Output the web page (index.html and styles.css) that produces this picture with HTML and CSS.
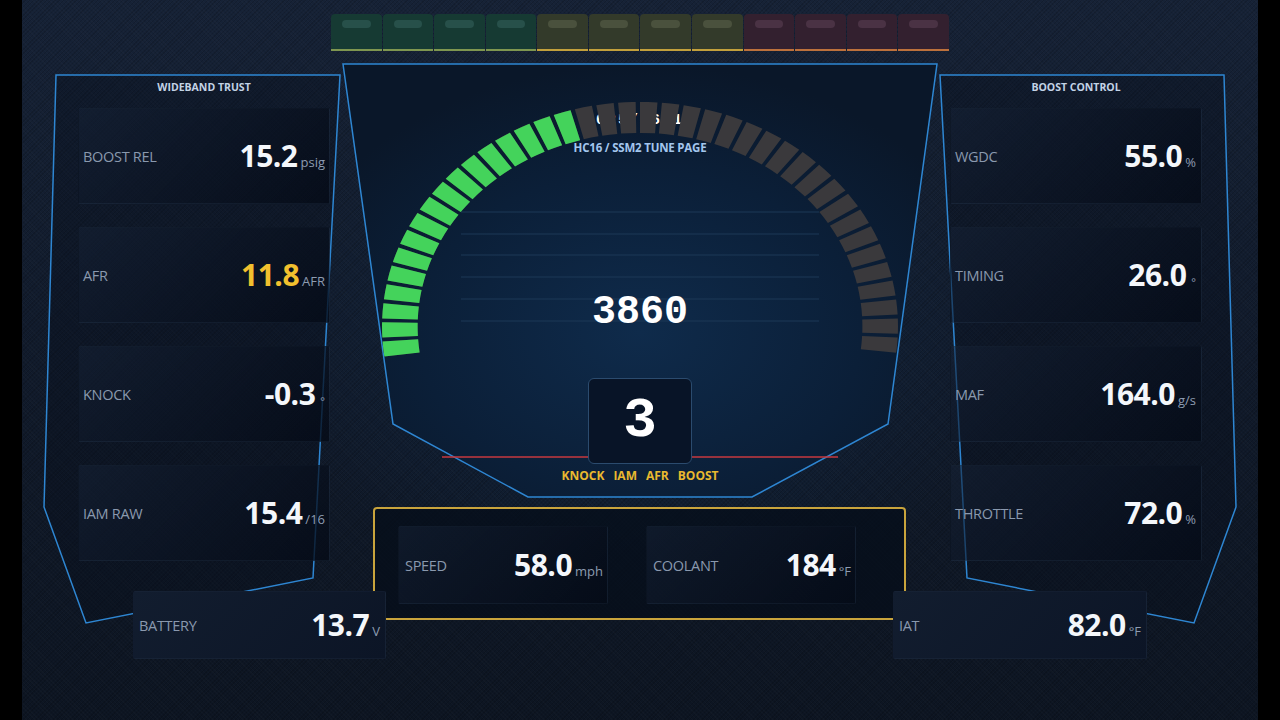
FILE: index.html
```html
<!DOCTYPE html>
<html lang="en">
<head>
  <meta charset="UTF-8" />
  <meta name="viewport" content="width=device-width, initial-scale=1" />
  <title>HC16 / SSM2 Tune Page</title>
  <link rel="stylesheet" href="styles.css">
</head>
<body>
  <div class="screen">

    <div class="leds" aria-label="Shift lights">
      <div class="led green"></div>
      <div class="led green"></div>
      <div class="led green"></div>
      <div class="led green"></div>
      <div class="led amber"></div>
      <div class="led amber"></div>
      <div class="led amber"></div>
      <div class="led amber"></div>
      <div class="led red"></div>
      <div class="led red"></div>
      <div class="led red"></div>
      <div class="led red"></div>
    </div>

    <div class="main">

      <section class="side left">
        <svg class="frame" viewBox="0 0 321 560" aria-hidden="true">
          <polygon points="34,11 318,11 291,514 64,559 22,443" />
        </svg>
        <h2>WIDEBAND TRUST</h2>
        <div class="cards">
          <div class="card"><span class="label">BOOST REL</span><span class="value">15.2<small>psig</small></span></div>
          <div class="card"><span class="label">AFR</span><span class="value warn">11.8<small>AFR</small></span></div>
          <div class="card"><span class="label">KNOCK</span><span class="value">-0.3<small class="deg">°</small></span></div>
          <div class="card"><span class="label">IAM RAW</span><span class="value">15.4<small>/16</small></span></div>
        </div>
      </section>

      <section class="center">
        <div class="gauge">
          <svg class="gauge-bg" viewBox="0 0 594 433" aria-hidden="true">
            <defs>
              <radialGradient id="glow" cx="50%" cy="62%" r="62%">
                <stop offset="0" stop-color="#0f2b4b" />
                <stop offset="0.6" stop-color="#0b1f38" />
                <stop offset="1" stop-color="#0a1729" />
              </radialGradient>
            </defs>
            <polygon class="bezel" points="0,0 594,0 545,360 409,433 185,433 50,360" />
            <g class="grid-lines">
              <line x1="118" y1="148" x2="476" y2="148" />
              <line x1="118" y1="170" x2="476" y2="170" />
              <line x1="118" y1="191" x2="476" y2="191" />
              <line x1="118" y1="213" x2="476" y2="213" />
              <line x1="118" y1="235" x2="476" y2="235" />
              <line x1="118" y1="257" x2="476" y2="257" />
            </g>
            <line class="redline" x1="99" y1="393" x2="495" y2="393" />
          </svg>

          <!-- tach segments: 40 steps, first 17 lit -->
          <svg class="arc" viewBox="-224.5 -224.5 449 449" preserveAspectRatio="none" aria-hidden="true">
            <path class="arc-off" pathLength="400" d="M -207.1 28.0 A 209 209 0 1 1 207.1 28.0" />
            <path class="arc-on" pathLength="170" d="M -207.1 28.0 A 209 209 0 0 1 -52.86 -202.2" />
          </svg>

          <div class="stamp">2025/06/14</div>
          <div class="page-title">HC16 / SSM2 TUNE PAGE</div>
          <div class="rpm">3860</div>
          <div class="gear">3</div>
          <div class="flags">
            <span>KNOCK</span>
            <span>IAM</span>
            <span>AFR</span>
            <span>BOOST</span>
          </div>
        </div>

        <div class="dock">
          <div class="card"><span class="label">SPEED</span><span class="value">58.0<small>mph</small></span></div>
          <div class="card"><span class="label">COOLANT</span><span class="value">184<small>°F</small></span></div>
        </div>
      </section>

      <section class="side right">
        <svg class="frame" viewBox="0 0 321 560" aria-hidden="true">
          <polygon points="3,11 287,11 299,443 257,559 30,514" />
        </svg>
        <h2>BOOST CONTROL</h2>
        <div class="cards">
          <div class="card"><span class="label">WGDC</span><span class="value">55.0<small>%</small></span></div>
          <div class="card"><span class="label">TIMING</span><span class="value">26.0<small class="deg">°</small></span></div>
          <div class="card"><span class="label">MAF</span><span class="value">164.0<small>g/s</small></span></div>
          <div class="card"><span class="label">THROTTLE</span><span class="value">72.0<small>%</small></span></div>
        </div>
      </section>

    </div>

    <div class="bottom">
      <div class="card battery"><span class="label">BATTERY</span><span class="value">13.7<small>V</small></span></div>
      <div class="card iat"><span class="label">IAT</span><span class="value">82.0<small>°F</small></span></div>
    </div>

  </div>
</body>
</html>
```

FILE: styles.css
```css
:root {
  --edge: #2e86d2;
  --label: #8a99ae;
  --unit: #8d9cb1;
  --value: #f4f7fb;
  --warn: #f2c02e;
  --gold: #c9a43c;
  --ui-font: "Open Sans", "Noto Sans", sans-serif;
  --mono-font: "Liberation Mono", "DejaVu Sans Mono", monospace;
}

* {
  box-sizing: border-box;
}

body {
  margin: 0;
  background: #000;
  font-family: var(--ui-font);
  color: var(--value);
  overflow: hidden;
}

.screen {
  width: 1236px;
  height: 720px;
  margin-left: 22px;
  padding-top: 14px;
  background:
    repeating-linear-gradient(45deg, rgba(255, 255, 255, 0.014) 0 1px, transparent 1px 3px),
    repeating-linear-gradient(-45deg, rgba(0, 0, 0, 0.14) 0 1px, transparent 1px 3px),
    radial-gradient(ellipse 40% 50% at 50% 48%, rgba(18, 58, 100, 0.35), transparent 75%),
    linear-gradient(180deg, #162236 0%, #111b2c 45%, #0d1522 100%);
}

/* shift lights */
.leds {
  width: 618px;
  height: 37px;
  margin: 0 auto;
  display: grid;
  grid-template-columns: repeat(12, 1fr);
  gap: 1px;
}

.led {
  position: relative;
  border-radius: 4px 4px 0 0;
  border-bottom: 2px solid;
}

.led::before {
  content: "";
  position: absolute;
  top: 6px;
  left: 11px;
  right: 11px;
  height: 8px;
  border-radius: 4px;
}

.led.green {
  background: #163a33;
  border-color: #7f9650;
}

.led.green::before {
  background: #27504a;
}

.led.amber {
  background: #333a2a;
  border-color: #c3a03c;
}

.led.amber::before {
  background: #4a513d;
}

.led.red {
  background: #33202f;
  border-color: #bd713c;
}

.led.red::before {
  background: #4a3244;
}

.main {
  margin-top: 13px;
  display: grid;
  grid-template-columns: 321px 594px 321px;
}

/* side columns */
.side {
  position: relative;
  padding: 15px 13px 0 56px;
}

.side.right {
  padding: 15px 56px 0 13px;
}

.frame {
  position: absolute;
  top: 0;
  left: 0;
  width: 321px;
  height: 560px;
  overflow: visible;
}

.frame polygon {
  fill: rgba(6, 14, 28, 0.3);
  stroke: var(--edge);
  stroke-width: 1.5;
}

.side h2 {
  position: relative;
  margin: 0 0 13px 0;
  font-size: 10.5px;
  line-height: 16px;
  font-weight: 700;
  text-align: center;
  color: #c3d3e6;
}

.cards {
  position: relative;
  display: flex;
  flex-direction: column;
  gap: 23px;
}

.card {
  display: flex;
  align-items: center;
  justify-content: space-between;
  height: 96px;
  padding: 0 4px;
  background: linear-gradient(135deg, rgba(22, 34, 54, 0.55), rgba(5, 11, 23, 0.8));
  border: 1px solid rgba(110, 150, 200, 0.05);
  border-radius: 2px;
}

.label {
  font-size: 14.5px;
  color: var(--label);
  letter-spacing: -0.3px;
}

.value {
  display: flex;
  align-items: baseline;
  gap: 3px;
  font-size: 30px;
  font-weight: 700;
  line-height: 1;
  color: var(--value);
  letter-spacing: -0.5px;
}

.value.warn {
  color: var(--warn);
}

.value small {
  font-size: 13px;
  font-weight: 400;
  color: var(--unit);
  letter-spacing: 0;
}

.value small.deg {
  font-size: 11px;
  margin-left: 2px;
}

.side.right .card {
  padding: 0 5px 0 4px;
}

/* centre gauge */
.gauge {
  position: relative;
  isolation: isolate;
  height: 433px;
  display: flex;
  flex-direction: column;
  align-items: center;
  padding-top: 49px;
}

.gauge-bg {
  position: absolute;
  top: 0;
  left: 0;
  width: 594px;
  height: 433px;
  overflow: visible;
  z-index: 0;
}

.bezel {
  fill: url(#glow);
  stroke: var(--edge);
  stroke-width: 1.5;
}

.grid-lines line {
  stroke: #1d3957;
  stroke-width: 1;
}

.redline {
  stroke: #c7383f;
  stroke-width: 1.5;
}

.arc {
  position: absolute;
  left: 39px;
  top: 38px;
  width: 516px;
  height: 449px;
  z-index: 2;
}

.arc path {
  fill: none;
  stroke-width: 31;
  stroke-dasharray: 8 2;
}

.arc-off {
  stroke: #3a393c;
}

.arc-on {
  stroke: #44d35b;
}

.stamp {
  position: relative;
  z-index: 1;
  font-family: var(--mono-font);
  font-size: 15px;
  font-weight: 700;
  line-height: 16px;
  letter-spacing: 2px;
  color: #fff;
}

.page-title,
.rpm,
.gear,
.flags {
  position: relative;
  z-index: 3;
}

.page-title {
  margin-top: 12px;
  font-size: 11.5px;
  line-height: 14px;
  font-weight: 700;
  color: #a3c6ee;
  letter-spacing: -0.2px;
}

.rpm {
  margin-top: 136px;
  font-family: var(--mono-font);
  font-size: 40px;
  line-height: 44px;
  font-weight: 700;
  color: #fff;
}

.gear {
  margin-top: 43px;
  width: 104px;
  height: 86px;
  border: 1px solid #2b4b6e;
  border-radius: 6px;
  background: #081427;
  font-family: var(--mono-font);
  font-size: 56px;
  line-height: 84px;
  font-weight: 700;
  text-align: center;
  color: #fff;
}

.flags {
  margin-top: 5px;
  display: flex;
  gap: 9px;
  font-size: 12px;
  line-height: 14px;
  font-weight: 700;
  color: #e9b92f;
}

/* speed / coolant dock */
.dock {
  margin: 10px 31px 0 30px;
  height: 113px;
  padding: 17px 0 0 23px;
  border: 2px solid var(--gold);
  border-radius: 4px;
  background: rgba(6, 13, 25, 0.75);
  display: flex;
  gap: 38px;
}

.dock .card {
  width: 210px;
  height: 78px;
  padding: 0 4px 0 6px;
}

/* battery / iat row */
.bottom {
  position: relative;
  z-index: 2;
  margin-top: -29px;
  padding-left: 111px;
  display: flex;
  gap: 507px;
}

.bottom .card {
  height: 68px;
  padding: 0 5px;
  background: linear-gradient(135deg, #121d2f, #0c1526);
}

.battery {
  width: 253px;
}

.iat {
  width: 254px;
}
```
